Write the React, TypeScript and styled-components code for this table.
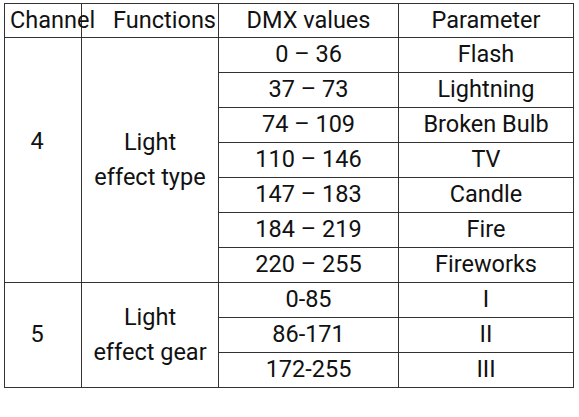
import { FC } from "react";
import styled, { createGlobalStyle } from "styled-components";

interface Irange {
  dmx: string;
  param: string;
}

interface Igroup {
  channel: string;
  fn: string[];
  raise?: boolean;
  ranges: Irange[];
}

const groups: Igroup[] = [
  {
    channel: "4",
    fn: ["Light", "effect type"],
    raise: true,
    ranges: [
      { dmx: "0 – 36", param: "Flash" },
      { dmx: "37 – 73", param: "Lightning" },
      { dmx: "74 – 109", param: "Broken Bulb" },
      { dmx: "110 – 146", param: "TV" },
      { dmx: "147 – 183", param: "Candle" },
      { dmx: "184 – 219", param: "Fire" },
      { dmx: "220 – 255", param: "Fireworks" },
    ],
  },
  {
    channel: "5",
    fn: ["Light", "effect gear"],
    ranges: [
      { dmx: "0-85", param: "I" },
      { dmx: "86-171", param: "II" },
      { dmx: "172-255", param: "III" },
    ],
  },
];

const App: FC = () => {
  return (
    <>
      <GlobalStyle />
      <Page>
        <Table>
          <colgroup>
            <col style={{ width: 77 }} />
            <col style={{ width: 137 }} />
            <col style={{ width: 180 }} />
            <col style={{ width: 175 }} />
          </colgroup>
          <thead>
            <HeadRow>
              <HeadCell className="channel">Channel</HeadCell>
              <HeadCell className="functions">Functions</HeadCell>
              <HeadCell>DMX values</HeadCell>
              <HeadCell>Parameter</HeadCell>
            </HeadRow>
          </thead>
          <tbody>
            {groups.map((g) =>
              g.ranges.map((r, i) => (
                <Row key={g.channel + r.dmx}>
                  {i === 0 && (
                    <>
                      <ChannelCell rowSpan={g.ranges.length} $raise={g.raise}>
                        {g.channel}
                      </ChannelCell>
                      <FunctionCell rowSpan={g.ranges.length}>
                        {g.fn.map((line) => (
                          <div key={line}>{line}</div>
                        ))}
                      </FunctionCell>
                    </>
                  )}
                  <Cell>{r.dmx}</Cell>
                  <Cell>{r.param}</Cell>
                </Row>
              ))
            )}
          </tbody>
        </Table>
      </Page>
    </>
  );
};

export default App;

const GlobalStyle = createGlobalStyle`
  html, body {
    margin: 0;
    padding: 0;
    background: #ffffff;
  }
  body {
    font-family: Roboto, "Liberation Sans", sans-serif;
    color: #111111;
  }
`;

const Page = styled.div`
  width: 579px;
  height: 417px;
  padding: 3px 0 0 4px;
  box-sizing: border-box;
`;

const Table = styled.table`
  border-collapse: collapse;
  table-layout: fixed;
  width: 569px;
  font-size: 23.5px;
  font-weight: 400;
  line-height: 1;

  td,
  th {
    border: 1.5px solid #333333;
    padding: 0;
    text-align: center;
    vertical-align: middle;
    white-space: nowrap;
  }
`;

const HeadRow = styled.tr`
  height: 34px;
`;

const HeadCell = styled.th`
  font-weight: 400;

  &.channel {
    text-align: left;
    padding-left: 5px;
    overflow: visible;
  }

  &.functions {
    text-align: right;
    padding-right: 2px;
  }
`;

const Row = styled.tr`
  height: 35px;
`;

const Cell = styled.td``;

const ChannelCell = styled.td<{ $raise?: boolean }>`
  padding-right: 12px !important;
  padding-bottom: ${({ $raise }) => ($raise ? "36px" : "0")} !important;
`;

const FunctionCell = styled.td`
  line-height: 35px;
`;
